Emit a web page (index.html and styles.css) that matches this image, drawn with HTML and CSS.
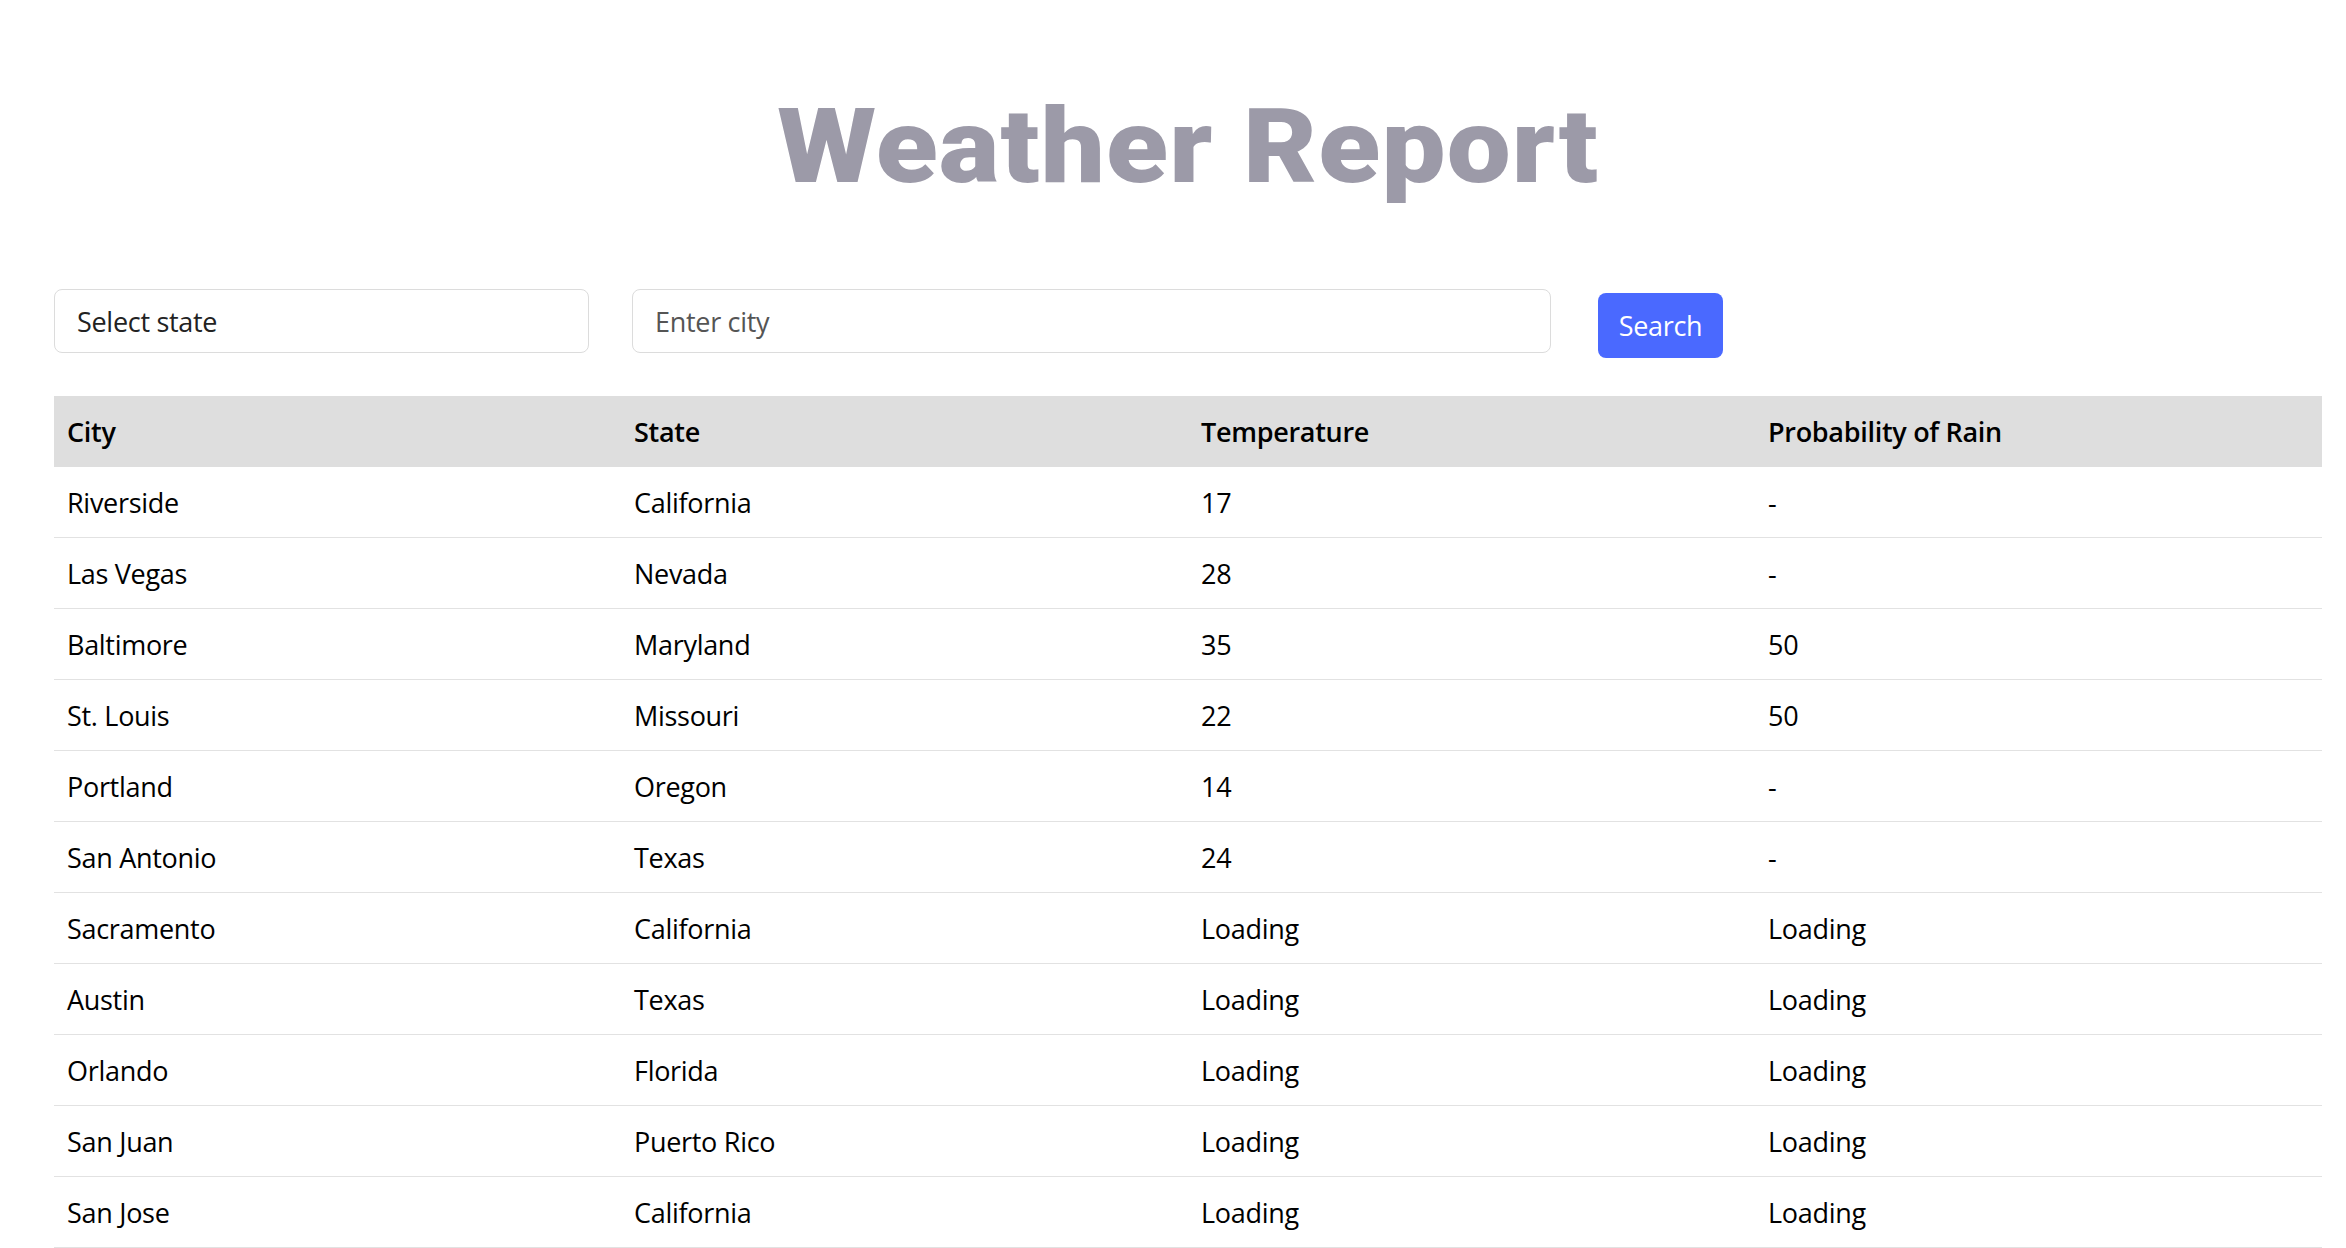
FILE: index.html
```html
<!DOCTYPE html>
<html lang="en">
<head>
<meta charset="utf-8">
<title>Weather Report</title>
<link rel="stylesheet" href="styles.css">
</head>
<body>
<div class="page">
  <h1 class="title"><span class="title-text">Weather Report</span></h1>
  <div class="controls">
    <div class="field state-field">Select state</div>
    <div class="field city-field"><span class="placeholder">Enter city</span></div>
    <button class="search-btn" type="button">Search</button>
  </div>
  <table class="report">
    <thead>
      <tr><th>City</th><th>State</th><th>Temperature</th><th>Probability of Rain</th></tr>
    </thead>
    <tbody>
      <tr><td>Riverside</td><td>California</td><td>17</td><td>-</td></tr>
      <tr><td>Las Vegas</td><td>Nevada</td><td>28</td><td>-</td></tr>
      <tr><td>Baltimore</td><td>Maryland</td><td>35</td><td>50</td></tr>
      <tr><td>St. Louis</td><td>Missouri</td><td>22</td><td>50</td></tr>
      <tr><td>Portland</td><td>Oregon</td><td>14</td><td>-</td></tr>
      <tr><td>San Antonio</td><td>Texas</td><td>24</td><td>-</td></tr>
      <tr><td>Sacramento</td><td>California</td><td>Loading</td><td>Loading</td></tr>
      <tr><td>Austin</td><td>Texas</td><td>Loading</td><td>Loading</td></tr>
      <tr><td>Orlando</td><td>Florida</td><td>Loading</td><td>Loading</td></tr>
      <tr><td>San Juan</td><td>Puerto Rico</td><td>Loading</td><td>Loading</td></tr>
      <tr><td>San Jose</td><td>California</td><td>Loading</td><td>Loading</td></tr>
    </tbody>
  </table>
</div>
</body>
</html>
```

FILE: styles.css
```css
html, body {
  margin: 0;
  padding: 0;
  background: #ffffff;
}
body {
  font-family: "Open Sans", "Noto Sans", sans-serif;
  color: #000;
}
.page {
  padding: 0 24px 0 54px;
}
.title {
  margin: 0;
  padding-top: 95px;
  height: 211px;
  box-sizing: border-box;
  text-align: center;
  font-family: "Roboto", "Inter", sans-serif;
  font-weight: 900;
  font-size: 104px;
  line-height: 1;
  color: #9c9aa8;
  letter-spacing: 1px;
}
.title-text {
  display: inline-block;
  transform: scaleX(1.095);
  transform-origin: center;
}
.controls {
  display: flex;
  align-items: flex-start;
  margin-top: 78px;
  height: 107px;
}
.field {
  box-sizing: border-box;
  height: 64px;
  border: 1.5px solid #dcdcdc;
  border-radius: 8px;
  display: flex;
  align-items: center;
  padding-left: 22px;
  font-size: 27px;
  letter-spacing: -0.3px;
  color: #222;
}
.state-field {
  width: 535px;
}
.city-field {
  width: 919px;
  margin-left: 43px;
}
.placeholder {
  color: #555;
}
.search-btn {
  margin-left: 47px;
  margin-top: 4px;
  width: 125px;
  height: 65px;
  border: none;
  border-radius: 8px;
  background: #4a69ff;
  color: #fff;
  font-family: "Open Sans", "Noto Sans", sans-serif;
  font-size: 27px;
  letter-spacing: -0.3px;
  padding: 0;
}
.report {
  width: 100%;
  table-layout: fixed;
  border-collapse: collapse;
  font-size: 27px;
  letter-spacing: -0.3px;
}
.report th {
  background: #dedede;
  height: 71px;
  padding: 0 0 0 13px;
  text-align: left;
  font-weight: 600;
}
.report td {
  height: 70px;
  padding: 0 0 0 13px;
  border-bottom: 1.5px solid #e2e2e2;
}
```
